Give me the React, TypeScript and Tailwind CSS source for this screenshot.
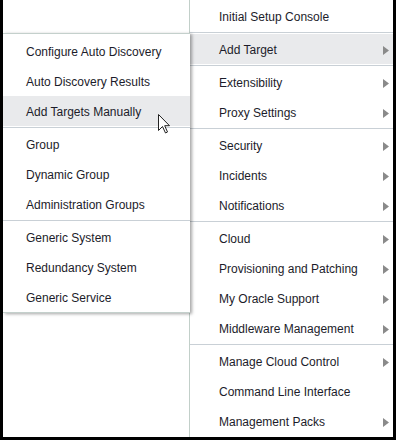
import React from 'react';

type Item = { label: string; arrow?: boolean; active?: boolean };

const mainGroups: Item[][] = [
  [{ label: 'Initial Setup Console' }],
  [{ label: 'Add Target', arrow: true, active: true }],
  [
    { label: 'Extensibility', arrow: true },
    { label: 'Proxy Settings', arrow: true },
  ],
  [
    { label: 'Security', arrow: true },
    { label: 'Incidents', arrow: true },
    { label: 'Notifications', arrow: true },
  ],
  [
    { label: 'Cloud', arrow: true },
    { label: 'Provisioning and Patching', arrow: true },
    { label: 'My Oracle Support', arrow: true },
    { label: 'Middleware Management', arrow: true },
  ],
  [
    { label: 'Manage Cloud Control', arrow: true },
    { label: 'Command Line Interface' },
    { label: 'Management Packs', arrow: true },
  ],
];

const subGroups: Item[][] = [
  [
    { label: 'Configure Auto Discovery' },
    { label: 'Auto Discovery Results' },
    { label: 'Add Targets Manually', active: true },
  ],
  [
    { label: 'Group' },
    { label: 'Dynamic Group' },
    { label: 'Administration Groups' },
  ],
  [
    { label: 'Generic System' },
    { label: 'Redundancy System' },
    { label: 'Generic Service' },
  ],
];

const Arrow = () => (
  <svg width="6" height="9" viewBox="0 0 6 9" className="shrink-0">
    <polygon points="0,0 6,4.5 0,9" fill="#8a8a8a" />
  </svg>
);

const Separator = () => (
  <div className="py-px">
    <div className="h-px bg-[#c9d0d6]" />
  </div>
);

const Row = ({ item, pl }: { item: Item; pl: string }) => (
  <div
    className={`flex h-[30px] items-center justify-between pt-[2px] pr-[4px] ${pl} ${
      item.active ? 'bg-[#e9eaec]' : ''
    }`}
  >
    <span className="whitespace-nowrap">{item.label}</span>
    {item.arrow && <Arrow />}
  </div>
);

const Cursor = () => (
  <svg
    width="13"
    height="20"
    viewBox="0 0 13 20"
    className="absolute left-[158px] top-[114px] z-20"
  >
    <path
      d="M0.5 0.5 L0.5 16.5 L4.5 12.5 L7.5 19 L9.5 18 L6.7 11.7 L11.5 11.7 Z"
      fill="#ffffff"
      stroke="#222222"
      strokeWidth="1"
      strokeLinejoin="miter"
    />
  </svg>
);

export default function App() {
  return (
    <div
      className="relative h-[440px] w-[396px] bg-black pb-[3px] pl-[3px] pr-[3px] text-[12px] text-[#1c1c2a]"
      style={{ fontFamily: '"Liberation Sans", Arial, sans-serif' }}
    >
      <div className="flex h-full bg-white">
        {/* Add Target submenu */}
        <div className="w-[186px] shrink-0 pt-[33px]">
          <div className="relative z-10 w-[187px] border-y border-[#c4d0cc] bg-white pt-[2px] shadow-[2px_1px_3px_rgba(0,0,0,0.35)]">
            {subGroups.map((group, gi) => (
              <div key={gi}>
                {gi > 0 && <Separator />}
                {group.map((item) => (
                  <Row key={item.label} item={item} pl="pl-[23px]" />
                ))}
              </div>
            ))}
          </div>
        </div>

        {/* Setup menu */}
        <div className="flex-1 border-l border-[#c2cfc9] bg-white pt-px">
          {mainGroups.map((group, gi) => (
            <div key={gi}>
              {gi > 0 && <Separator />}
              {group.map((item) => (
                <Row key={item.label} item={item} pl="pl-[29px]" />
              ))}
            </div>
          ))}
        </div>
      </div>
      <Cursor />
    </div>
  );
}
